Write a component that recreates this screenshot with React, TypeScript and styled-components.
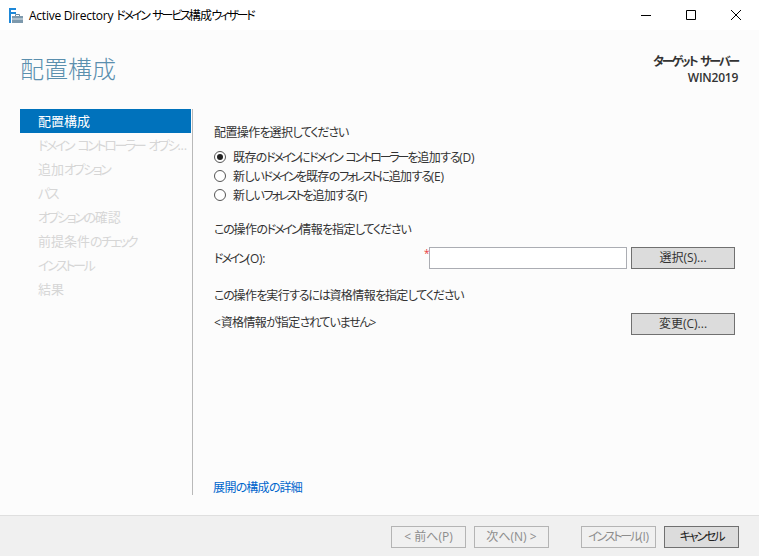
import styled, { createGlobalStyle } from 'styled-components'

const GlobalStyle = createGlobalStyle`
  html, body {
    margin: 0;
    padding: 0;
    background: #fcfcfc;
  }
  * {
    box-sizing: border-box;
  }
`

const Window = styled.div`
  --kanji-track: -0.05em;
  width: 759px;
  height: 556px;
  display: flex;
  flex-direction: column;
  overflow: hidden;
  font-family: "Open Sans", "Noto Sans CJK JP", sans-serif;
  font-feature-settings: "palt";
  font-size: 12px;
  color: #333;
`

const TitleBar = styled.div`
  height: 30px;
  flex: none;
  background: #fff;
  display: flex;
  align-items: center;
  padding: 0 1px 0 9px;
  color: #000;
`

const TitleText = styled.div`
  margin-left: 5px;
  flex: 1;
  white-space: nowrap;
`

const WindowButton = styled.button`
  width: 45px;
  height: 30px;
  padding: 0;
  border: 0;
  background: none;
  display: flex;
  align-items: center;
  justify-content: center;
`

const Body = styled.div`
  flex: 1;
  background: #fcfcfc;
  display: flex;
  flex-direction: column;
  min-height: 0;
`

const Header = styled.div`
  height: 79px;
  flex: none;
  display: flex;
  justify-content: space-between;
  padding: 21px 21px 0 20px;
`

const PageTitle = styled.h1`
  margin: 0;
  font-size: 24px;
  line-height: 36px;
  font-weight: 300;
  color: #5a8fae;
`

const TargetServer = styled.div`
  text-align: right;
  font-weight: 600;
  line-height: 16px;
  margin-top: 3px;
`

const Main = styled.div`
  flex: 1;
  display: flex;
  min-height: 0;
  padding: 0 0 20px 20px;
`

const Sidebar = styled.nav`
  --kanji-track: 0;
  width: 173px;
  flex: none;
  border-right: 1px solid #b9b9b9;
  padding-right: 1px;
`

const NavItem = styled.div<{ $active?: boolean }>`
  height: 24px;
  line-height: 24px;
  padding-left: 18px;
  font-size: 13px;
  white-space: nowrap;
  background: ${props => (props.$active ? '#0072bc' : 'transparent')};
  color: ${props => (props.$active ? '#fff' : '#d6d6d6')};
`

const Content = styled.div`
  flex: 1;
  padding: 16px 24px 0 21px;
  display: flex;
  flex-direction: column;
`

const SectionLabel = styled.div`
  line-height: 16px;
`

const RadioGroup = styled.div`
  margin-top: 8px;
  display: flex;
  flex-direction: column;
  gap: 3px;
`

const RadioRow = styled.label`
  height: 16px;
  display: flex;
  align-items: center;
  gap: 7px;
`

const RadioMark = styled.span<{ $checked?: boolean }>`
  width: 12px;
  height: 12px;
  flex: none;
  border: 1px solid #555;
  border-radius: 50%;
  background: #fff;
  display: flex;
  align-items: center;
  justify-content: center;

  &::after {
    content: '';
    width: 6px;
    height: 6px;
    border-radius: 50%;
    background: ${props => (props.$checked ? '#222' : 'transparent')};
  }
`

const DomainLabel = styled.div`
  width: 215px;
  flex: none;
`

const FieldRow = styled.div<{ $top: number }>`
  display: flex;
  align-items: center;
  margin-top: ${props => props.$top}px;
`

const InputWrap = styled.div`
  position: relative;
  display: flex;
`

const RequiredMark = styled.span`
  position: absolute;
  left: -5px;
  top: -1px;
  color: #e8393b;
  font-size: 10px;
  line-height: 14px;
`

const TextInput = styled.input`
  width: 198px;
  height: 22px;
  border: 1px solid #abadb3;
  background: #fff;
  padding: 0 4px;
  margin-right: 4px;
`

const ActionButton = styled.button`
  width: 104px;
  height: 22px;
  padding: 0;
  font: inherit;
  line-height: 20px;
  color: #333;
  background: #dcdcdc;
  border: 1px solid #707070;
`

const StatusText = styled.div`
  flex: 1;
  margin-bottom: 4px;
`

const Spacer = styled.div`
  flex: 1;
`

const DetailLink = styled.a`
  color: #0066cc;
  line-height: 16px;
  margin: 0 0 -1px -1px;
  text-decoration: none;
`

const Footer = styled.div`
  height: 41px;
  flex: none;
  background: #f0f0f0;
  border-top: 1px solid #dfdfdf;
  display: flex;
  justify-content: flex-end;
  align-items: flex-start;
  padding: 10px 20px 0 0;
`

const FooterButton = styled.button<{ $off?: boolean; $gap?: number }>`
  width: 75px;
  height: 22px;
  padding: 0;
  margin-left: ${props => props.$gap ?? 0}px;
  font: inherit;
  line-height: 20px;
  white-space: nowrap;
  color: ${props => (props.$off ? '#8d8d8d' : '#222')};
  background: ${props => (props.$off ? '#f0f0f0' : '#dcdcdc')};
  border: 1px solid ${props => (props.$off ? '#b4b4b4' : '#707070')};
`

// The UI font of the original sets kana much narrower than Noto does, so each script gets its own tracking
const tracking = {
  katakana: '-0.18em',
  hiragana: '-0.1em',
  kanji: 'var(--kanji-track)',
  latin: '-0.02em',
  space: '0.05em',
}

type Script = keyof typeof tracking

const Run = styled.span<{ $script: Script }>`
  letter-spacing: ${props => tracking[props.$script]};
`

function scriptOf(text: string): Script {
  if (text === ' ') return 'space'
  if (/^[\u30A0-\u30FF]/.test(text)) return 'katakana'
  if (/^[\u3040-\u309F]/.test(text)) return 'hiragana'
  if (/^[\u4E00-\u9FFF]/.test(text)) return 'kanji'
  return 'latin'
}

function Jp({ children }: { children: string }) {
  const runs = children.match(/[\u30A0-\u30FF]+|[\u3040-\u309F]+|[\u4E00-\u9FFF]+|[^\u30A0-\u30FF\u3040-\u309F\u4E00-\u9FFF]+/g) ?? []
  return (
    <span>
      {runs.map((run, i) => (
        <Run key={i} $script={scriptOf(run)}>{run}</Run>
      ))}
    </span>
  )
}

function WizardIcon() {
  return (
    <svg width="15" height="15" viewBox="0 0 15 15">
      <path d="M0 0h7v2H2v2h5v2H2v9H0z" fill="#1e88d8" />
      <path d="M3 8h11v7H3z" fill="#7d99ad" />
      <path d="M6.5 8V6.5h4V8" fill="none" stroke="#6b8aa0" />
      <path d="M3 11h11" stroke="#dfe7ec" />
    </svg>
  )
}

const steps = [
  'ドメイン コントローラー オプシ...',
  '追加オプション',
  'パス',
  'オプションの確認',
  '前提条件のチェック',
  'インストール',
  '結果',
]

export default function App() {
  return (
    <Window>
      <GlobalStyle />
      <TitleBar>
        <WizardIcon />
        <TitleText><Jp>Active Directory ドメイン サービス構成ウィザード</Jp></TitleText>
        <WindowButton aria-label="最小化">
          <svg width="10" height="10" viewBox="0 0 10 10">
            <path d="M0 5.5h10" stroke="#000" fill="none" />
          </svg>
        </WindowButton>
        <WindowButton aria-label="最大化">
          <svg width="10" height="10" viewBox="0 0 10 10">
            <path d="M.5.5h9v9h-9z" stroke="#000" fill="none" />
          </svg>
        </WindowButton>
        <WindowButton aria-label="閉じる">
          <svg width="10" height="10" viewBox="0 0 10 10">
            <path d="M0 0l10 10M10 0L0 10" stroke="#000" fill="none" />
          </svg>
        </WindowButton>
      </TitleBar>
      <Body>
        <Header>
          <PageTitle>配置構成</PageTitle>
          <TargetServer>
            <Jp>ターゲット サーバー</Jp>
            <br />
            <Jp>WIN2019</Jp>
          </TargetServer>
        </Header>
        <Main>
          <Sidebar>
            <NavItem $active>配置構成</NavItem>
            {steps.map(step => (
              <NavItem key={step}><Jp>{step}</Jp></NavItem>
            ))}
          </Sidebar>
          <Content>
            <SectionLabel><Jp>配置操作を選択してください</Jp></SectionLabel>
            <RadioGroup>
              <RadioRow>
                <RadioMark $checked />
                <Jp>既存のドメインにドメイン コントローラーを追加する(D)</Jp>
              </RadioRow>
              <RadioRow>
                <RadioMark />
                <Jp>新しいドメインを既存のフォレストに追加する(E)</Jp>
              </RadioRow>
              <RadioRow>
                <RadioMark />
                <Jp>新しいフォレストを追加する(F)</Jp>
              </RadioRow>
            </RadioGroup>
            <FieldRow $top={19}>
              <SectionLabel><Jp>この操作のドメイン情報を指定してください</Jp></SectionLabel>
            </FieldRow>
            <FieldRow $top={9}>
              <DomainLabel><Jp>ドメイン(O):</Jp></DomainLabel>
              <InputWrap>
                <RequiredMark>*</RequiredMark>
                <TextInput />
              </InputWrap>
              <ActionButton>選択(S)...</ActionButton>
            </FieldRow>
            <FieldRow $top={19}>
              <SectionLabel><Jp>この操作を実行するには資格情報を指定してください</Jp></SectionLabel>
            </FieldRow>
            <FieldRow $top={9}>
              <StatusText><Jp>&lt;資格情報が指定されていません&gt;</Jp></StatusText>
              <ActionButton>変更(C)...</ActionButton>
            </FieldRow>
            <Spacer />
            <DetailLink href="#"><Jp>展開の構成の詳細</Jp></DetailLink>
          </Content>
        </Main>
        <Footer>
          <FooterButton $off>&lt; 前へ(P)</FooterButton>
          <FooterButton $off $gap={8}>次へ(N) &gt;</FooterButton>
          <FooterButton $off $gap={32}><Jp>インストール(I)</Jp></FooterButton>
          <FooterButton $gap={8}><Jp>キャンセル</Jp></FooterButton>
        </Footer>
      </Body>
    </Window>
  )
}
